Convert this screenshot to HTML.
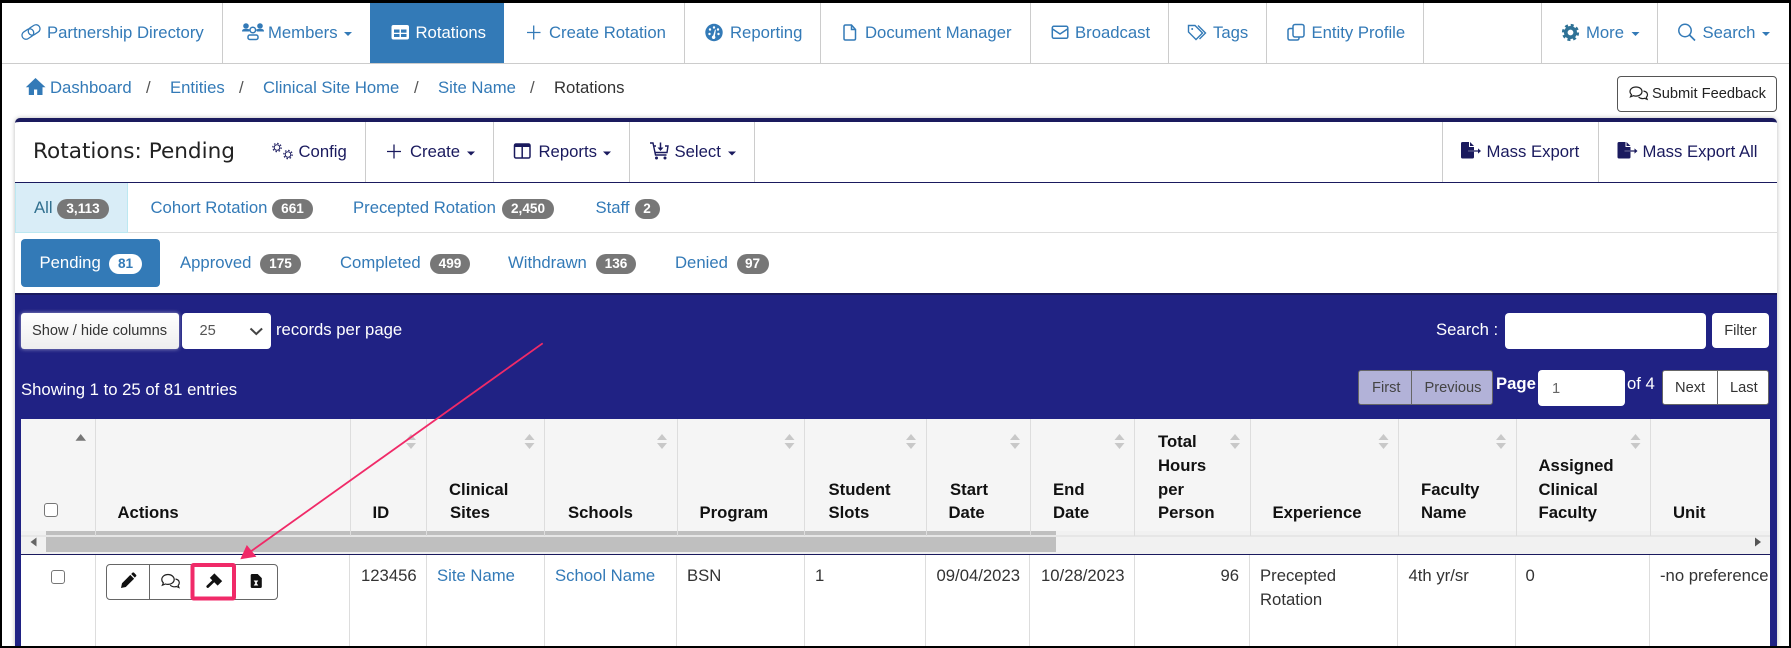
<!DOCTYPE html>
<html lang="en">
<head>
<meta charset="utf-8">
<title>Rotations: Pending</title>
<style>
html,body{margin:0;padding:0;background:#fff;width:1791px;height:648px;overflow:hidden}
body{position:relative;font-family:"Liberation Sans",Arial,sans-serif;color:#333}
#page{position:absolute;left:0;top:0;width:1791px;height:648px;overflow:hidden}
div,span,a{position:absolute;box-sizing:border-box}
.t{white-space:nowrap;line-height:20px;height:20px;font-size:16.7px;margin-top:1px}
.s{font-size:14.65px}
.b{color:#337ab7}
.n{color:#1a1a5e}
.w{color:#fff}
.h{font-weight:700;color:#111}
.l{background:#ccc;width:1px}
.bd{background:#777;color:#fff;font-weight:700;font-size:13.6px;height:20px;line-height:20px;border-radius:10px;text-align:center;white-space:nowrap}
.ck{width:14px;height:14px;border:1px solid #767676;border-radius:3px;background:#fff}
.wb{background:#fff;border-radius:4px}
.c{text-align:center}
svg{position:absolute;left:0;top:0}
</style>
</head>
<body>
<div id="page">

<!-- top nav -->
<div style="left:2px;top:3px;width:1787px;height:61px;border-bottom:1px solid #ccc;background:#fff"></div>
<div style="left:370px;top:3px;width:134px;height:60px;background:#337ab7"></div>
<div class="l" style="left:222px;top:3px;height:60px"></div>
<div class="l" style="left:684px;top:3px;height:60px"></div>
<div class="l" style="left:820px;top:3px;height:60px"></div>
<div class="l" style="left:1030px;top:3px;height:60px"></div>
<div class="l" style="left:1168px;top:3px;height:60px"></div>
<div class="l" style="left:1266px;top:3px;height:60px"></div>
<div class="l" style="left:1423px;top:3px;height:60px"></div>
<div class="l" style="left:1541px;top:3px;height:60px"></div>
<div class="l" style="left:1657px;top:3px;height:60px"></div>

<a class="t b" style="left:47px;top:22px">Partnership Directory</a>
<a class="t b" style="left:268px;top:22px">Members</a>
<a class="t w" style="left:415.5px;top:22px">Rotations</a>
<a class="t b" style="left:549px;top:22px">Create Rotation</a>
<a class="t b" style="left:730px;top:22px">Reporting</a>
<a class="t b" style="left:865px;top:22px">Document Manager</a>
<a class="t b" style="left:1075px;top:22px">Broadcast</a>
<a class="t b" style="left:1213px;top:22px">Tags</a>
<a class="t b" style="left:1311.5px;top:22px">Entity Profile</a>
<a class="t b" style="left:1586px;top:22px">More</a>
<a class="t b" style="left:1702.5px;top:22px">Search</a>

<!-- breadcrumb -->
<a class="t b" style="left:50px;top:77px">Dashboard</a>
<span class="t" style="left:146px;top:77px;color:#555">/</span>
<a class="t b" style="left:170px;top:77px">Entities</a>
<span class="t" style="left:239px;top:77px;color:#555">/</span>
<a class="t b" style="left:263px;top:77px">Clinical Site Home</a>
<span class="t" style="left:414px;top:77px;color:#555">/</span>
<a class="t b" style="left:438px;top:77px">Site Name</a>
<span class="t" style="left:530px;top:77px;color:#555">/</span>
<span class="t" style="left:554px;top:77px">Rotations</span>

<div style="left:1617px;top:76px;width:160px;height:36px;border:1px solid #555;border-radius:4px;background:#fff"></div>
<span class="t s" style="left:1652px;top:83px;color:#222">Submit Feedback</span>

<!-- panel -->
<div style="left:15px;top:118px;width:1762px;height:528px;background:#fff;border-top:4px solid #1a1a5e;border-radius:5px 5px 0 0;box-shadow:0 0 5px rgba(0,0,0,.28)"></div>
<div style="left:15px;top:182px;width:1762px;height:1px;background:#1a1a5e"></div>
<div class="l" style="left:365px;top:122px;height:60px"></div>
<div class="l" style="left:493px;top:122px;height:60px"></div>
<div class="l" style="left:629px;top:122px;height:60px"></div>
<div class="l" style="left:754px;top:122px;height:60px"></div>
<div class="l" style="left:1442px;top:122px;height:60px"></div>
<div class="l" style="left:1598px;top:122px;height:60px"></div>

<span class="t" style="left:33px;top:139px;font-family:'DejaVu Sans',sans-serif;font-size:21.6px;color:#222;line-height:24px;height:24px">Rotations: Pending</span>
<span class="t n" style="left:298.5px;top:141px">Config</span>
<span class="t n" style="left:410px;top:141px">Create</span>
<span class="t n" style="left:538.5px;top:141px">Reports</span>
<span class="t n" style="left:674.5px;top:141px">Select</span>
<span class="t n" style="left:1486.5px;top:141px">Mass Export</span>
<span class="t n" style="left:1642.5px;top:141px">Mass Export All</span>

<!-- tabs row 1 -->
<div style="left:15px;top:183px;width:113px;height:50px;background:#d9edf7;border-right:1px solid #bce8f1;border-bottom:1px solid #bce8f1;border-left:1px solid #bce8f1"></div>
<div style="left:128px;top:232px;width:1649px;height:1px;background:#ddd"></div>
<span class="t" style="left:34px;top:197px;color:#31708f">All</span>
<span class="bd" style="left:57px;top:199px;width:52px">3,113</span>
<a class="t b" style="left:150.5px;top:197px">Cohort Rotation</a>
<span class="bd" style="left:272px;top:199px;width:41px">661</span>
<a class="t b" style="left:353px;top:197px">Precepted Rotation</a>
<span class="bd" style="left:502px;top:199px;width:52px">2,450</span>
<a class="t b" style="left:595.5px;top:197px">Staff</a>
<span class="bd" style="left:634.5px;top:199px;width:25px">2</span>

<!-- tabs row 2 -->
<div style="left:21px;top:239px;width:139px;height:48px;background:#337ab7;border-radius:4px"></div>
<span class="t w" style="left:39.5px;top:252px">Pending</span>
<span class="bd" style="left:109px;top:254px;width:33px;background:#fff;color:#337ab7">81</span>
<a class="t b" style="left:180px;top:252px">Approved</a>
<span class="bd" style="left:260px;top:254px;width:41px">175</span>
<a class="t b" style="left:340px;top:252px">Completed</a>
<span class="bd" style="left:430px;top:254px;width:40px">499</span>
<a class="t b" style="left:508px;top:252px">Withdrawn</a>
<span class="bd" style="left:596px;top:254px;width:40px">136</span>
<a class="t b" style="left:675px;top:252px">Denied</a>
<span class="bd" style="left:736.5px;top:254px;width:32px">97</span>

<!-- navy grid block -->
<div style="left:15px;top:293px;width:1762px;height:353px;background:#202284;border-top:2px solid #1a1a5e"></div>

<div style="left:21px;top:313px;width:158px;height:36px;background:linear-gradient(#fff,#eee);border-radius:3px;box-shadow:0 0 4px rgba(255,255,255,.55)"></div>
<span class="t s" style="left:32px;top:320px;color:#333">Show / hide columns</span>
<div class="wb" style="left:182px;top:313px;width:89px;height:36px"></div>
<span class="t s" style="left:199.5px;top:320px;color:#555">25</span>
<span class="t w" style="left:276px;top:319px">records per page</span>
<span class="t w" style="left:21px;top:379px">Showing 1 to 25 of 81 entries</span>

<span class="t w" style="left:1436px;top:319px">Search :</span>
<div class="wb" style="left:1505px;top:313px;width:201px;height:36px"></div>
<div class="wb" style="left:1712px;top:313px;width:57px;height:35px"></div>
<span class="t s c" style="left:1712px;top:320px;width:57px">Filter</span>

<div style="left:1358px;top:370px;width:135px;height:35px;background:#b2b2d8;border:1px solid #666;border-radius:3px"></div>
<div style="left:1411px;top:370px;width:1px;height:35px;background:#666"></div>
<span class="t s" style="left:1372px;top:377px;color:#444">First</span>
<span class="t s" style="left:1424.5px;top:377px;color:#444">Previous</span>
<span class="t w" style="left:1496px;top:373px;font-weight:700">Page</span>
<div class="wb" style="left:1538px;top:370px;width:87px;height:36px"></div>
<span class="t s" style="left:1552px;top:378px;color:#666">1</span>
<span class="t w" style="left:1627px;top:373px">of 4</span>
<div style="left:1662px;top:370px;width:107px;height:35px;background:#fff;border:1px solid #666;border-radius:3px"></div>
<div style="left:1717px;top:370px;width:1px;height:35px;background:#666"></div>
<span class="t s" style="left:1675px;top:377px">Next</span>
<span class="t s" style="left:1730px;top:377px">Last</span>

<!-- table -->
<div style="left:21px;top:419px;width:1749px;height:227px;background:#fff;overflow:hidden">
  <div style="left:0;top:0;width:1749px;height:112px;background:#f5f5f5"></div>
  <div style="left:0;top:112px;width:1749px;height:23px;background:#f1f1f1"></div>
  <div style="left:25px;top:112px;width:1010px;height:21px;background:#bfbfbf"></div>
  <div style="left:0;top:116px;width:1749px;height:1.5px;background:#e6e6e6"></div>
  <div style="left:0;top:135px;width:1749px;height:1px;background:#1a1a5e"></div>

  <!-- header column lines -->
  <div style="left:74px;top:0;width:1px;height:117px;background:#ddd"></div>
  <div style="left:329px;top:0;width:1px;height:117px;background:#ddd"></div>
  <div style="left:405px;top:0;width:1px;height:117px;background:#ddd"></div>
  <div style="left:523px;top:0;width:1px;height:117px;background:#ddd"></div>
  <div style="left:656px;top:0;width:1px;height:117px;background:#ddd"></div>
  <div style="left:783px;top:0;width:1px;height:117px;background:#ddd"></div>
  <div style="left:905px;top:0;width:1px;height:117px;background:#ddd"></div>
  <div style="left:1009px;top:0;width:1px;height:117px;background:#ddd"></div>
  <div style="left:1113px;top:0;width:1px;height:117px;background:#ddd"></div>
  <div style="left:1229px;top:0;width:1px;height:117px;background:#ddd"></div>
  <div style="left:1377px;top:0;width:1px;height:117px;background:#ddd"></div>
  <div style="left:1495px;top:0;width:1px;height:117px;background:#ddd"></div>
  <div style="left:1629px;top:0;width:1px;height:117px;background:#ddd"></div>

  <!-- body column lines -->
  <div style="left:74px;top:136px;width:1px;height:91px;background:#ddd"></div>
  <div style="left:328px;top:136px;width:1px;height:91px;background:#ddd"></div>
  <div style="left:405px;top:136px;width:1px;height:91px;background:#ddd"></div>
  <div style="left:523px;top:136px;width:1px;height:91px;background:#ddd"></div>
  <div style="left:655px;top:136px;width:1px;height:91px;background:#ddd"></div>
  <div style="left:783px;top:136px;width:1px;height:91px;background:#ddd"></div>
  <div style="left:904px;top:136px;width:1px;height:91px;background:#ddd"></div>
  <div style="left:1008px;top:136px;width:1px;height:91px;background:#ddd"></div>
  <div style="left:1113px;top:136px;width:1px;height:91px;background:#ddd"></div>
  <div style="left:1228px;top:136px;width:1px;height:91px;background:#ddd"></div>
  <div style="left:1376px;top:136px;width:1px;height:91px;background:#ddd"></div>
  <div style="left:1494px;top:136px;width:1px;height:91px;background:#ddd"></div>
  <div style="left:1628px;top:136px;width:1px;height:91px;background:#ddd"></div>

  <!-- header labels -->
  <span class="t h" style="left:96.5px;top:83px">Actions</span>
  <span class="t h" style="left:351.5px;top:83px">ID</span>
  <span class="t h" style="left:428px;top:60px">Clinical</span>
  <span class="t h" style="left:429px;top:83px">Sites</span>
  <span class="t h" style="left:547px;top:83px">Schools</span>
  <span class="t h" style="left:678.5px;top:83px">Program</span>
  <span class="t h" style="left:807.5px;top:60px">Student</span>
  <span class="t h" style="left:807.5px;top:83px">Slots</span>
  <span class="t h" style="left:929px;top:60px">Start</span>
  <span class="t h" style="left:927.5px;top:83px">Date</span>
  <span class="t h" style="left:1032px;top:60px">End</span>
  <span class="t h" style="left:1032px;top:83px">Date</span>
  <span class="t h" style="left:1137px;top:12px">Total</span>
  <span class="t h" style="left:1137px;top:36px">Hours</span>
  <span class="t h" style="left:1137px;top:60px">per</span>
  <span class="t h" style="left:1137px;top:83px">Person</span>
  <span class="t h" style="left:1251.5px;top:83px">Experience</span>
  <span class="t h" style="left:1400px;top:60px">Faculty</span>
  <span class="t h" style="left:1400px;top:83px">Name</span>
  <span class="t h" style="left:1517.5px;top:36px">Assigned</span>
  <span class="t h" style="left:1517.5px;top:60px">Clinical</span>
  <span class="t h" style="left:1517.5px;top:83px">Faculty</span>
  <span class="t h" style="left:1652px;top:83px">Unit</span>

  <!-- body -->
  <span class="t" style="left:340px;top:146px">123456</span>
  <a class="t b" style="left:416px;top:146px">Site Name</a>
  <a class="t b" style="left:534px;top:146px">School Name</a>
  <span class="t" style="left:666px;top:146px">BSN</span>
  <span class="t" style="left:794px;top:146px">1</span>
  <span class="t" style="left:915.5px;top:146px">09/04/2023</span>
  <span class="t" style="left:1020px;top:146px">10/28/2023</span>
  <span class="t" style="left:1199px;top:146px;width:19px;text-align:right">96</span>
  <span class="t" style="left:1239px;top:146px">Precepted</span>
  <span class="t" style="left:1239px;top:170px">Rotation</span>
  <span class="t" style="left:1387.5px;top:146px">4th yr/sr</span>
  <span class="t" style="left:1504.5px;top:146px">0</span>
  <span class="t" style="left:1639px;top:146px">-no preference</span>
</div>

<div class="ck" style="left:44px;top:503px"></div>
<div class="ck" style="left:51px;top:570px"></div>
<div style="left:106px;top:564px;width:172px;height:36px;border:1px solid #666;border-radius:4px;background:#fff"></div>
<div style="left:149px;top:564px;width:1px;height:36px;background:#666"></div>

<!-- icons + annotations -->
<svg width="1791" height="648" viewBox="0 0 1791 648">
  <!-- nav: link -->
  <g transform="translate(31 32) rotate(-33)" fill="none" stroke="#337ab7" stroke-width="1.3">
    <rect x="-10" y="-4" width="12.500" height="8" rx="4"/>
    <rect x="-2.500" y="-4" width="12.500" height="8" rx="4"/>
  </g>
  <!-- nav: users -->
  <g fill="#337ab7">
    <circle cx="246" cy="26" r="2.800"/><circle cx="260" cy="26" r="2.800"/>
    <path d="M242 31.500q0-2.500 2.500-2.500h3.500q1.500 0 2 1l-1 1.500h-7zM258 29h3.500q2.500 0 2.500 2.500h-7l-1-1.500q.5-1 2-1z"/>
  </g>
  <g fill="none" stroke="#337ab7" stroke-width="1.500">
    <circle cx="252.800" cy="30" r="2.800"/>
    <rect x="248" y="35" width="10" height="4.500" rx="1.800"/>
  </g>
  <!-- nav: table -->
  <rect x="391.500" y="25" width="17.500" height="14.500" rx="2" fill="#fff"/>
  <g fill="#337ab7"><rect x="394" y="29.500" width="5.500" height="3.200"/><rect x="401" y="29.500" width="5.500" height="3.200"/><rect x="394" y="34" width="5.500" height="3"/><rect x="401" y="34" width="5.500" height="3"/></g>
  <!-- nav: plus -->
  <path d="M527 32.500h13.500M533.700 25.500v14" stroke="#337ab7" stroke-width="1.300" fill="none"/>
  <!-- nav: reporting -->
  <circle cx="714" cy="32.500" r="8.700" fill="#337ab7"/>
  <g fill="#fff"><circle cx="710" cy="29.500" r="1.200"/><circle cx="714" cy="27.500" r="1.200"/><circle cx="718" cy="29.500" r="1.200"/><circle cx="709.500" cy="34" r="1.200"/><circle cx="718.500" cy="34" r="1.200"/><path d="M715 29.500l.9.3-1 6.200a1.800 1.800 0 1 1-1.700-.5z"/></g>
  <!-- nav: document -->
  <path d="M845.500 25h6l4 4.500v9q0 1.500-1.500 1.500h-8.500q-1.500 0-1.500-1.500v-12q0-1.500 1.500-1.500zM851.500 25v4.500h4" fill="none" stroke="#337ab7" stroke-width="1.500"/>
  <!-- nav: envelope -->
  <rect x="1052.300" y="26.300" width="15.500" height="12" rx="1.500" fill="none" stroke="#337ab7" stroke-width="1.500"/>
  <path d="M1052.500 29l7.500 5 7.500-5" fill="none" stroke="#337ab7" stroke-width="1.500"/>
  <!-- nav: tags -->
  <path d="M1188.500 25.500h6.500l7.500 7.500-6.500 6.500-7.500-7.500zM1198 25.500l7.500 7.500-6 6" fill="none" stroke="#337ab7" stroke-width="1.400"/>
  <circle cx="1192.200" cy="29" r="1" fill="#337ab7"/>
  <!-- nav: copy -->
  <rect x="1293" y="24.500" width="11" height="12.500" rx="2" fill="none" stroke="#337ab7" stroke-width="1.500"/>
  <path d="M1293 28.500h-3q-2 0-2 2v7.500q0 2 2 2h7q2 0 2-2v-1" fill="none" stroke="#337ab7" stroke-width="1.500"/>
  <!-- nav: cog -->
  <circle cx="1570.500" cy="32.500" r="4.700" fill="none" stroke="#2f7296" stroke-width="3.600"/>
  <circle cx="1570.500" cy="32.500" r="7.300" fill="none" stroke="#2f7296" stroke-width="2.600" stroke-dasharray="3 2.730"/>
  <!-- nav: search -->
  <circle cx="1685" cy="30.500" r="6.200" fill="none" stroke="#337ab7" stroke-width="1.500"/>
  <path d="M1689.500 35l5.500 5.500" stroke="#337ab7" stroke-width="1.700"/>
  <!-- nav carets -->
  <g fill="#337ab7">
    <path d="M344 32h8l-4 4z"/><path d="M1631.500 32h8l-4 4z"/><path d="M1762 32h8l-4 4z"/>
  </g>
  <!-- home -->
  <path d="M35.500 78L25.800 87.300h3V95h5.200v-5.500h3.200V95H42.500v-7.700h3z" fill="#337ab7"/>
  <!-- feedback -->
  <g fill="none" stroke="#222" stroke-width="1.200">
    <path d="M1636 87c-3.500 0-6 2-6 4.500 0 1.300.6 2.300 1.500 3.100l-1 2.200 3-1.100c.8.300 1.600.4 2.500.4 3.500 0 6-2 6-4.600S1639.500 87 1636 87z"/>
    <path d="M1643.500 91c2.500.5 4 2 4 3.800 0 1-.5 1.800-1.200 2.500l.8 2-2.500-1c-2 .6-4.500.2-6-1.300"/>
  </g>
  <!-- panel: gears -->
  <g fill="none" stroke="#1a1a5e">
    <circle cx="277" cy="147.500" r="2.800" stroke-width="1"/>
    <circle cx="277" cy="147.500" r="4.200" stroke-width="1.200" stroke-dasharray="1.500 1.800"/>
    <circle cx="288" cy="154.500" r="2.800" stroke-width="1"/>
    <circle cx="288" cy="154.500" r="4.200" stroke-width="1.200" stroke-dasharray="1.500 1.800"/>
  </g>
  <!-- panel: plus -->
  <path d="M387 151.500h14M394 144.500v14" stroke="#1a1a5e" stroke-width="1.300"/>
  <!-- panel: carets -->
  <g fill="#1a1a5e">
    <path d="M467 151.500h8l-4 4z"/><path d="M603 151.500h8l-4 4z"/><path d="M728 151.500h8l-4 4z"/>
  </g>
  <!-- panel: reports -->
  <rect x="514.500" y="144" width="15.500" height="14" rx="1.500" fill="none" stroke="#1a1a5e" stroke-width="1.500"/>
  <rect x="514.500" y="144" width="15.500" height="3" fill="#1a1a5e"/>
  <path d="M522.200 146v12" stroke="#1a1a5e" stroke-width="1.500"/>
  <!-- panel: cart -->
  <g fill="none" stroke="#1a1a5e" stroke-width="1.400">
    <path d="M650 143h3l2.500 12h11M654 146h2M665 146h3l-1 6.500h-11.500"/>
    <path d="M660.500 142.500v6.500" stroke-width="1.500"/>
  </g>
  <path d="M657.500 147.500h6l-3 3.500z" fill="#1a1a5e"/>
  <circle cx="656.500" cy="158" r="1.500" fill="#1a1a5e"/><circle cx="665" cy="158" r="1.500" fill="#1a1a5e"/>
  <!-- panel: mass export -->
  <g fill="#1a1a5e">
    <path d="M1462.500 142h6.500v5h5v3.200h-6v1.600h6V157q0 1.500-1.500 1.500h-10q-1.500 0-1.500-1.500v-13.500q0-1.500 1.500-1.500z"/>
    <path d="M1470 142l4 4h-4zM1468 150.400h10v-2l3 2.600-3 2.600v-2h-10z"/>
  </g>
  <g fill="#1a1a5e">
    <path d="M1619 142h6.500v5h5v3.200h-6v1.600h6V157q0 1.500-1.500 1.500h-10q-1.500 0-1.500-1.500v-13.500q0-1.500 1.500-1.500z"/>
    <path d="M1626.500 142l4 4h-4zM1624.500 150.400h10v-2l3 2.600-3 2.600v-2h-10z"/>
  </g>
  <!-- select chevron -->
  <path d="M250.500 328.500l5.800 5.500 5.800-5.500" fill="none" stroke="#444" stroke-width="2"/>
  <!-- sort up active -->
  <path d="M75.500 440.700l5.200-6.700 5.300 6.700z" fill="#777"/>
  <!-- sort arrows -->
  <g fill="#c8c8c8">
    <path d="M406 440l5-6 5 6zM406 443l5 6 5-6z"/>
    <path d="M524.500 440l5-6 5 6zM524.500 443l5 6 5-6z"/>
    <path d="M657 440l5-6 5 6zM657 443l5 6 5-6z"/>
    <path d="M784.500 440l5-6 5 6zM784.500 443l5 6 5-6z"/>
    <path d="M906 440l5-6 5 6zM906 443l5 6 5-6z"/>
    <path d="M1010 440l5-6 5 6zM1010 443l5 6 5-6z"/>
    <path d="M1114.500 440l5-6 5 6zM1114.500 443l5 6 5-6z"/>
    <path d="M1230 440l5-6 5 6zM1230 443l5 6 5-6z"/>
    <path d="M1378.500 440l5-6 5 6zM1378.500 443l5 6 5-6z"/>
    <path d="M1496 440l5-6 5 6zM1496 443l5 6 5-6z"/>
    <path d="M1630.500 440l5-6 5 6zM1630.500 443l5 6 5-6z"/>
  </g>
  <!-- scrollbar arrows -->
  <path d="M36.500 537.500v9l-6-4.500z" fill="#666"/>
  <path d="M1755 537.500v9l6-4.500z" fill="#555"/>
  <!-- row: pencil -->
  <path d="M121 588l1-4.800 8.300-8.300 3.800 3.800-8.300 8.300zM131.200 574l1.200-1.200q.8-.8 1.700 0l1.900 1.900q.8.900 0 1.700l-1.200 1.200z" fill="#111"/>
  <!-- row: chat -->
  <g fill="none" stroke="#222" stroke-width="1.200">
    <path d="M168 574.500c-3.500 0-6.200 2.200-6.200 5 0 1.400.6 2.500 1.600 3.400l-1 2.300 3.100-1.200c.8.300 1.600.4 2.500.4 3.500 0 6.200-2.200 6.200-4.900s-2.700-5-6.200-5z"/>
    <path d="M175.500 579c2.300.5 3.800 2 3.800 3.800 0 1-.5 1.900-1.200 2.600l.8 2.100-2.500-1c-2 .7-4.800.2-6.200-1.400"/>
  </g>
  <!-- row: gavel -->
  <rect x="-5.500" y="-3.200" width="11" height="6.400" transform="translate(216 579.500) rotate(45)" fill="#111"/>
  <path d="M207.800 586.500l6-5.800" stroke="#111" stroke-width="2.800" stroke-linecap="round"/>
  <!-- row: file -->
  <path d="M252 574h5.700l4.100 4.100V586.500q0 1.500-1.500 1.500H252q-1.300 0-1.300-1.500V575.500q0-1.500 1.300-1.500z" fill="#111"/>
  <path d="M253.700 580.500h4.600l-1.700 2.500 1.700 2.500h-4.600l1.700-2.500z" fill="#fff"/>
  <!-- annotation -->
  <rect x="192.500" y="565" width="41.500" height="33.500" rx="1" fill="none" stroke="#f02a68" stroke-width="4"/>
  <path d="M542.700 343.300L250 552" stroke="#f02a68" stroke-width="1.800" fill="none"/>
  <path d="M240.300 559.300L246.800 545 256.400 556.700z" fill="#f02a68"/>
</svg>

<!-- screenshot black frame -->
<div style="left:0;top:0;width:1791px;height:3px;background:#000"></div>
<div style="left:0;top:646px;width:1791px;height:2px;background:#000"></div>
<div style="left:0;top:0;width:2px;height:648px;background:#000"></div>
<div style="left:1789px;top:0;width:2px;height:648px;background:#000"></div>

</div>
</body>
</html>
